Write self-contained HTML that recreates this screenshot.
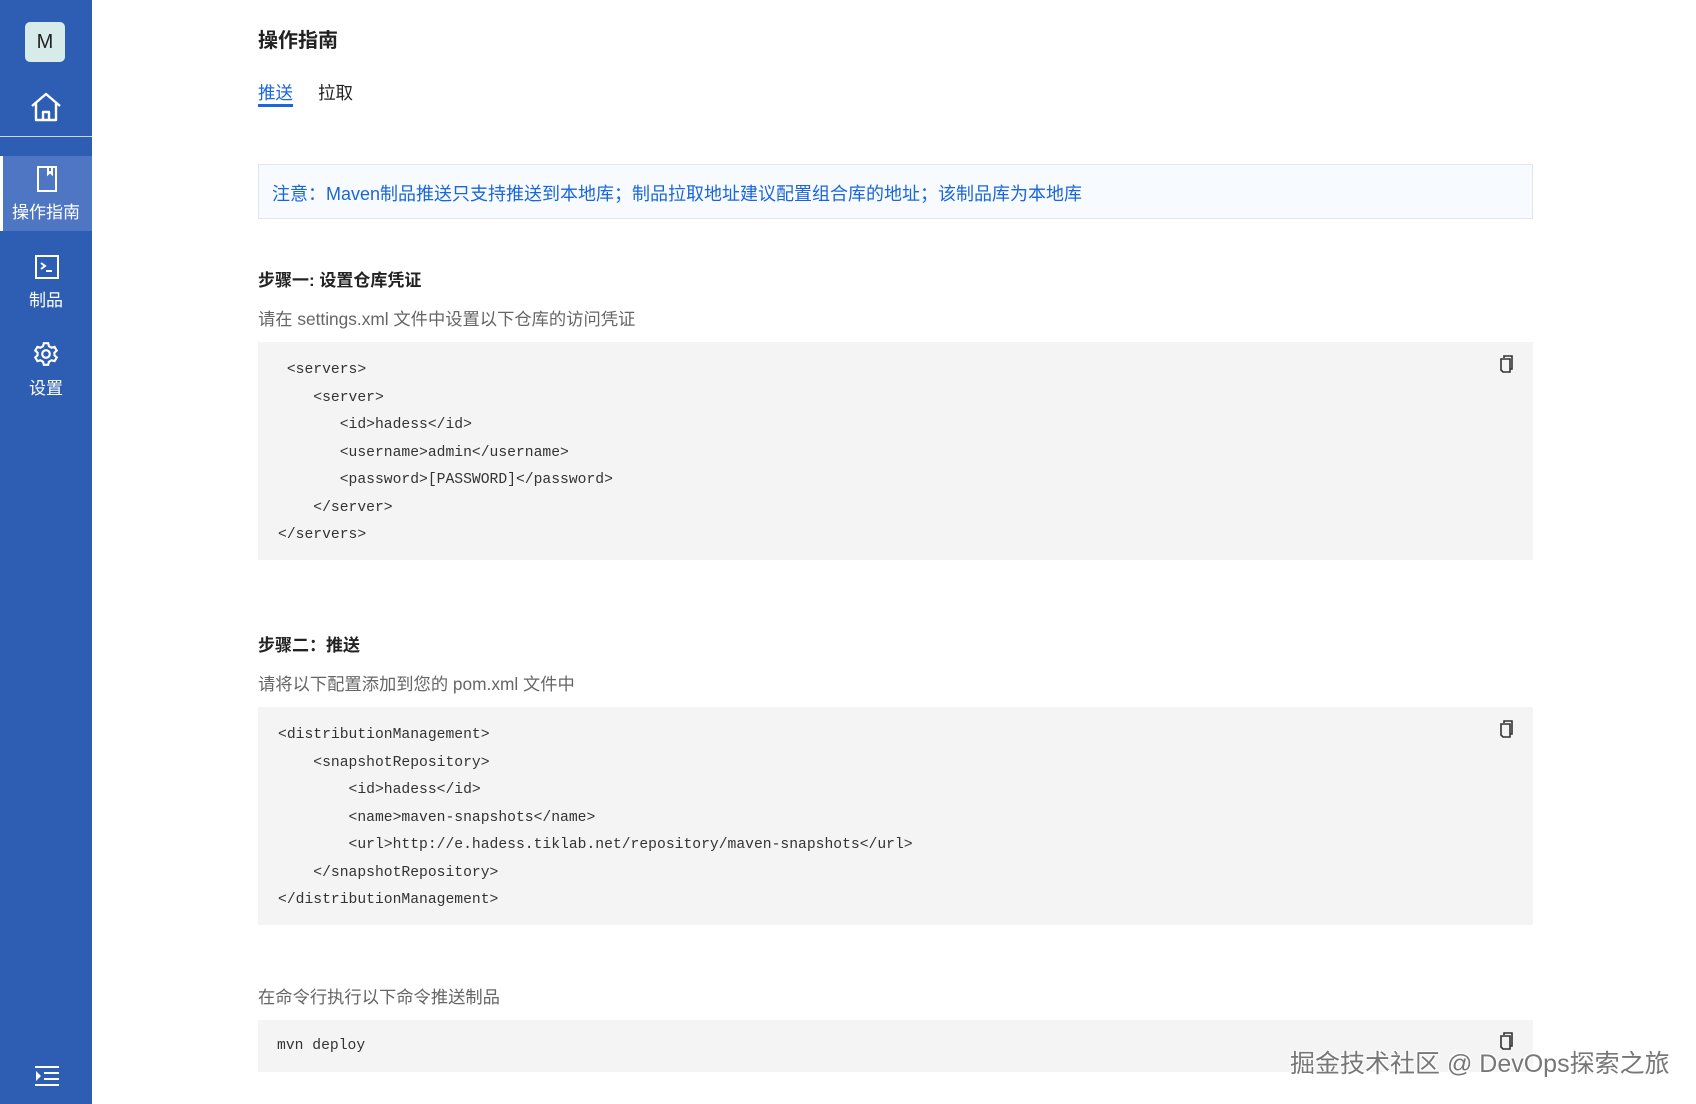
<!DOCTYPE html>
<html><head><meta charset="utf-8">
<style>
*{margin:0;padding:0;box-sizing:border-box}
body{width:1696px;height:1104px;overflow:hidden;background:#fff;font-family:"Liberation Sans","Noto Sans CJK SC",sans-serif;position:relative}
.sb{position:absolute;left:0;top:0;width:92px;height:1104px;background:#2e5db4}
.av{position:absolute;left:25px;top:22px;width:40px;height:40px;border-radius:5px;background:#d7ecea;color:#222;font-size:20px;text-align:center;line-height:40px}
.div{position:absolute;left:0;top:136px;width:92px;height:1px;background:#c9d6ee}
.act{position:absolute;left:0;top:156px;width:92px;height:75px;background:#4f76c2;border-left:3px solid #fff}
.lbl{position:absolute;left:0;width:92px;text-align:center;color:#fff;font-size:17px}
.ic{position:absolute}
.t{position:absolute;white-space:pre}
.code{position:absolute;left:258px;width:1275px;background:#f4f4f4}
.mono{font-family:"Liberation Mono","Noto Sans CJK SC",monospace;font-size:14.7px;color:#333;position:absolute;white-space:pre}
.h{font-size:17px;font-weight:bold;color:#222}
.d{font-size:17.3px;color:#666}
</style></head><body>
<div class="sb">
<div class="av">M</div>
<svg class="ic" style="left:30px;top:91px" width="32" height="32" viewBox="0 0 32 32" fill="none" stroke="#fff" stroke-width="2.4" stroke-linejoin="round"><path d="M2 15 L16 3 L30 15"/><path d="M6 12 V29 H26 V12"/><path d="M13 29 V21 H19 V29"/></svg>
<div class="div"></div>
<div class="act"></div>
<svg class="ic" style="left:36px;top:166px" width="22" height="26" viewBox="0 0 22 26" fill="none" stroke="#fff" stroke-width="2"><rect x="2" y="1" width="18" height="24"/><path d="M12 1 V8 L14 6 L16 8 V1"/></svg>
<div class="lbl" style="top:198px">操作指南</div>
<svg class="ic" style="left:35px;top:255px" width="24" height="24" viewBox="0 0 24 24" fill="none" stroke="#fff" stroke-width="2"><rect x="1" y="1" width="22" height="22"/><path d="M6 8 L10 11 L6 14 M11 16 H17"/></svg>
<div class="lbl" style="top:286px">制品</div>
<svg class="ic" style="left:33px;top:341px" width="26" height="26" viewBox="0 0 24 24" fill="none" stroke="#fff" stroke-width="2"><circle cx="12" cy="12" r="3.5"/><path d="M10 2h4l.7 2.8 2.4 1.4 2.8-.8 2 3.4-2.1 2v2.4l2.1 2-2 3.4-2.8-.8-2.4 1.4L14 22h-4l-.7-2.8-2.4-1.4-2.8.8-2-3.4 2.1-2V10.8l-2.1-2 2-3.4 2.8.8 2.4-1.4z"/></svg>
<div class="lbl" style="top:374px">设置</div>
<svg class="ic" style="left:35px;top:1066px" width="24" height="20" viewBox="0 0 24 20" fill="#fff"><rect x="0" y="0" width="24" height="2"/><rect x="9" y="6" width="15" height="2"/><rect x="9" y="12" width="15" height="2"/><rect x="0" y="18" width="24" height="2"/><path d="M1 5 L6 10 L1 15z"/></svg>
</div>

<div class="t" style="left:258px;top:24px;font-size:20px;font-weight:bold;color:#222">操作指南</div>
<div class="t" style="left:258px;top:80px;font-size:17.5px;color:#1a66e0">推送</div>
<div style="position:absolute;left:258px;top:104px;width:35px;height:3px;background:#1a66e0"></div>
<div class="t" style="left:318px;top:80px;font-size:17.5px;color:#222">拉取</div>

<div style="position:absolute;left:258px;top:164px;width:1275px;height:55px;border:1px solid #dfe6ef;background:#f7fbff"></div>
<div class="t" style="left:272px;top:180px;font-size:18px;color:#1a66d9">注意：Maven制品推送只支持推送到本地库；制品拉取地址建议配置组合库的地址；该制品库为本地库</div>

<div class="t h" style="left:258px;top:266px">步骤一: 设置仓库凭证</div>
<div class="t d" style="left:258px;top:305px">请在 settings.xml 文件中设置以下仓库的访问凭证</div>
<div class="code" style="top:342px;height:218px"></div>
<div class="mono" style="left:278px;top:357px;line-height:27.5px"> &lt;servers&gt;
    &lt;server&gt;
       &lt;id&gt;hadess&lt;/id&gt;
       &lt;username&gt;admin&lt;/username&gt;
       &lt;password&gt;[PASSWORD]&lt;/password&gt;
    &lt;/server&gt;
&lt;/servers&gt;</div>

<div class="t h" style="left:258px;top:631px">步骤二：推送</div>
<div class="t d" style="left:258px;top:670px">请将以下配置添加到您的 pom.xml 文件中</div>
<div class="code" style="top:707px;height:218px"></div>
<div class="mono" style="left:278px;top:722px;line-height:27.5px">&lt;distributionManagement&gt;
    &lt;snapshotRepository&gt;
        &lt;id&gt;hadess&lt;/id&gt;
        &lt;name&gt;maven-snapshots&lt;/name&gt;
        &lt;url&gt;http://e.hadess.tiklab.net/repository/maven-snapshots&lt;/url&gt;
    &lt;/snapshotRepository&gt;
&lt;/distributionManagement&gt;</div>

<div class="t d" style="left:258px;top:983px">在命令行执行以下命令推送制品</div>
<div class="code" style="top:1020px;height:52px"></div>
<div class="mono" style="left:277px;top:1038px">mvn deploy</div>

<svg class="ic" style="left:1499px;top:355px" width="16" height="18" viewBox="0 0 16 18" fill="none" stroke="#333" stroke-width="1.6"><path d="M5 3 V1 H13 V14 H11"/><path d="M2 4 H11 V17 H4 L2 15z"/></svg>
<svg class="ic" style="left:1499px;top:720px" width="16" height="18" viewBox="0 0 16 18" fill="none" stroke="#333" stroke-width="1.6"><path d="M5 3 V1 H13 V14 H11"/><path d="M2 4 H11 V17 H4 L2 15z"/></svg>
<svg class="ic" style="left:1499px;top:1032px" width="16" height="18" viewBox="0 0 16 18" fill="none" stroke="#333" stroke-width="1.6"><path d="M5 3 V1 H13 V14 H11"/><path d="M2 4 H11 V17 H4 L2 15z"/></svg>

<div class="t" style="left:1290px;top:1044px;font-size:25px;color:#777;text-shadow:1px 1px 0 #fff,-1px -1px 0 #fff,1px -1px 0 #fff,-1px 1px 0 #fff">掘金技术社区 @ DevOps探索之旅</div>
</body></html>
